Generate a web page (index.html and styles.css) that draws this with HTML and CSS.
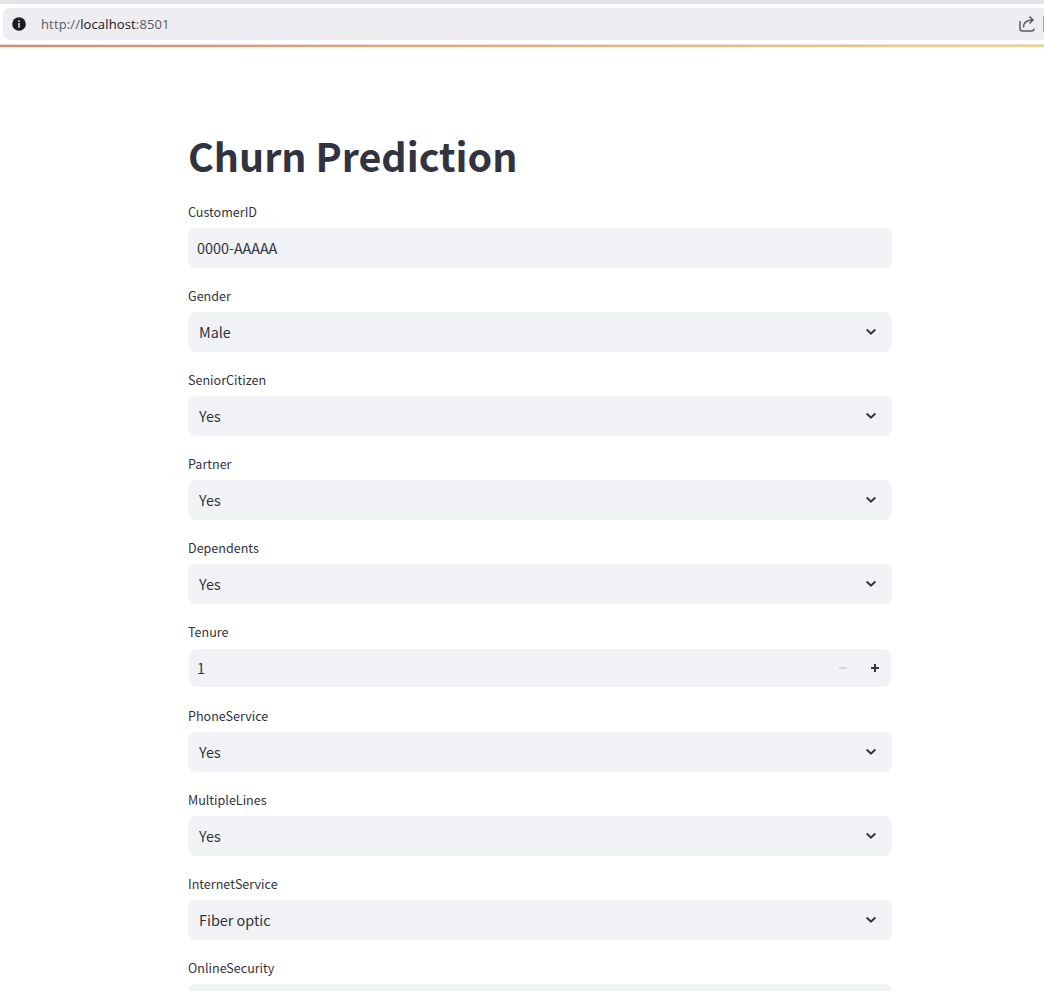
FILE: index.html
```
<!DOCTYPE html>
<html lang="en">
<head>
<meta charset="utf-8">
<title>Churn Prediction</title>
<link rel="stylesheet" href="styles.css">
</head>
<body>
<svg class="defs" aria-hidden="true"><symbol id="chevron" viewBox="0 0 12 12"><path d="M1.7 3.500 6 7.600 10.3 3.500" fill="none" stroke="#31333f" stroke-width="2"/></symbol></svg>
<header class="browser">
  <div class="address">
    <svg class="info" viewBox="0 0 14 14"><circle cx="7" cy="7" r="6.8" fill="#1c1b22"/><path d="M7 3.2v1.7M7 6v4.7" stroke="#d8d8de" stroke-width="1.6"/></svg>
    <span class="url">http://<b>localhost</b>:8501</span>
    <svg class="share" viewBox="0 0 18 18"><path d="M2 6v7.500Q2 16 4.500 16h9Q16 16 16 13.500M5.500 12.500C5.500 7.500 8 5 14.500 5M11.500 1.500l3.500 3.500L11.500 8.500" fill="none" stroke="#5b5b64" stroke-width="1.5"/></svg>
    <i class="divider"></i>
  </div>
</header>
<div class="decoration"></div>
<main class="form">
  <h1>Churn Prediction</h1>
  <div class="field"><label>CustomerID</label><div class="box text"><span>0000-AAAAA</span></div></div>
  <div class="field"><label>Gender</label><div class="box"><span>Male</span><svg><use href="#chevron"/></svg></div></div>
  <div class="field"><label>SeniorCitizen</label><div class="box"><span>Yes</span><svg><use href="#chevron"/></svg></div></div>
  <div class="field"><label>Partner</label><div class="box"><span>Yes</span><svg><use href="#chevron"/></svg></div></div>
  <div class="field"><label>Dependents</label><div class="box"><span>Yes</span><svg><use href="#chevron"/></svg></div></div>
  <div class="field number-field"><label>Tenure</label><div class="box number"><span>1</span><i class="minus"></i><i class="plus"></i></div></div>
  <div class="field"><label>PhoneService</label><div class="box"><span>Yes</span><svg><use href="#chevron"/></svg></div></div>
  <div class="field"><label>MultipleLines</label><div class="box"><span>Yes</span><svg><use href="#chevron"/></svg></div></div>
  <div class="field"><label>InternetService</label><div class="box"><span>Fiber optic</span><svg><use href="#chevron"/></svg></div></div>
  <div class="field"><label>OnlineSecurity</label><div class="box"></div></div>
</main>
</body>
</html>
```
FILE: styles.css
```
* { box-sizing: border-box; }
html, body { margin: 0; height: 991px; overflow: hidden; }
body { background: #fff; color: #31333f; font-family: "Noto Sans CJK SC", "Open Sans", sans-serif; }
.defs { display: block; width: 0; height: 0; }
.browser { height: 45px; border-top: 4px solid #e3e3e8; border-bottom: 1px solid #e0e0e6; padding: 4px 0 4px 3px; }
.address { height: 32px; display: flex; align-items: center; background: #ededf2; border-radius: 7px 0 0 7px; padding-left: 9px; }
.info { width: 14px; height: 14px; }
.url { margin-left: 15px; font: 13px/20px "Open Sans", sans-serif; letter-spacing: 0.14px; color: #5b5b66; }
.url b { font-weight: 400; color: #15141a; }
.share { width: 18px; height: 18px; margin-left: auto; }
.divider { width: 1px; height: 16px; margin-left: 7px; background: #aaaab0; }
.decoration { height: 2px; background: linear-gradient(90deg, #ff7a5e, #ffd071); }
.form { width: 704px; margin-left: 188px; padding-top: 78px; }
h1 { margin: 0; height: 75px; font-size: 39.400px; line-height: 60px; font-weight: 700; white-space: nowrap; }
.field { height: 84px; }
label { display: block; height: 28px; font-size: 12.550px; line-height: 24px; }
.box { height: 40px; display: flex; align-items: center; background: #f0f2f6; border-radius: 8px; padding: 0 15px 0 11px; font-size: 14.400px; line-height: 24px; }
.box svg { width: 12px; height: 12px; margin-left: auto; }
.text { padding-left: 9px; }
.number-field label { height: 29px; }
.number { height: 38px; margin: 0 1px; padding: 0 12px 0 8px; }
.minus, .plus { width: 8px; height: 2px; }
.minus { margin-left: auto; background: #d5dae2; }
.plus { margin-left: 24px; height: 8px; background: linear-gradient(#31333f, #31333f) center / 8px 2px no-repeat, linear-gradient(#31333f, #31333f) center / 2px 8px no-repeat; }
```
